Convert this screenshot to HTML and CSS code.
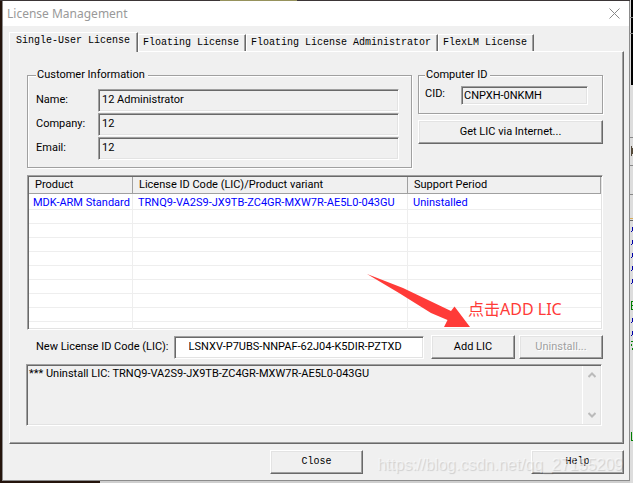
FILE: index.html
```html
<!DOCTYPE html>
<html lang="en">
<head>
<meta charset="utf-8">
<title>License Management</title>
<meta name="viewport" content="width=device-width, initial-scale=1">
<link rel="stylesheet" href="styles.css">
</head>
<body>
<div class="backdrop-top"></div>
<svg class="backdrop-right" width="3" height="483" viewBox="0 0 3 483" aria-hidden="true">
  <path fill="#ddd" d="M0 0h3v483H0z"/>
  <path fill="#000" d="M1 0h2v85H1z"/>
  <path fill="#888" d="M0 17h3v1H0zM0 33h3v1H0zM0 137h3v1H0zM0 165h3v1H0zM0 194h3v1H0z"/>
  <path fill="#554a3a" d="M1 146h1v10H1zM2 148h1v6H2z"/>
  <path fill="#d8ae5a" d="M0 218h3v1H0z"/>
  <path fill="#666" d="M0 220h3v1H0z"/>
  <path fill="#0000a8" d="M2 227h1v4H2zM1 231h1v1H1zM2 240h1v4H2zM1 244h1v1H1zM2 253h1v4H2zM1 257h1v1H1zM2 266h1v4H2zM1 270h1v1H1zM2 279h1v4H2zM1 283h1v1H1zM2 318h1v4H2zM1 322h1v1H1zM2 331h1v4H2zM1 335h1v1H1z"/>
  <path fill="#008000" d="M1 301h1v9H1zM2 301h1v1H2zM2 305h1v1H2zM2 309h1v1H2zM1 341h2v1H1zM1 344h1v2H1zM2 348h1v2H2zM1 432h1v9H1zM2 440h1v1H2z"/>
</svg>
<main class="window">
  <header class="titlebar">
    <h1 class="title">License Management</h1>
    <button class="close-x" type="button" aria-label="Close window">
      <svg width="11" height="11" viewBox="0 0 11 11" aria-hidden="true"><path d="M.5.5l10 10M10.500.5l-10 10" stroke="#888" fill="none"/></svg>
    </button>
  </header>
  <div class="content">
    <nav class="tabs" role="tablist">
      <button class="tab tab-active" type="button" role="tab" aria-selected="true">Single-User License</button>
      <button class="tab" type="button" role="tab">Floating License</button>
      <button class="tab" type="button" role="tab">Floating License Administrator</button>
      <button class="tab" type="button" role="tab">FlexLM License</button>
    </nav>
    <section class="panel">
      <div class="top-row">
        <fieldset class="group customer">
          <legend>Customer Information</legend>
          <label for="name">Name:</label><input class="field sunken" id="name" value="12 Administrator" readonly>
          <label for="company">Company:</label><input class="field sunken" id="company" value="12" readonly>
          <label for="email">Email:</label><input class="field sunken" id="email" value="12" readonly>
        </fieldset>
        <div class="side">
          <fieldset class="group computer">
            <legend>Computer ID</legend>
            <label for="cid">CID:</label><input class="field sunken" id="cid" value="CNPXH-0NKMH" readonly>
          </fieldset>
          <button class="btn" type="button">Get LIC via Internet...</button>
        </div>
      </div>
      <div class="list sunken">
        <table class="licenses">
          <colgroup><col class="col-product"><col class="col-code"><col></colgroup>
          <thead><tr><th>Product</th><th>License ID Code (LIC)/Product variant</th><th>Support Period</th></tr></thead>
          <tbody>
            <tr><td>MDK-ARM Standard</td><td>TRNQ9-VA2S9-JX9TB-ZC4GR-MXW7R-AE5L0-043GU</td><td>Uninstalled</td></tr>
            <tr><td></td><td></td><td></td></tr>
            <tr><td></td><td></td><td></td></tr>
            <tr><td></td><td></td><td></td></tr>
            <tr><td></td><td></td><td></td></tr>
            <tr><td></td><td></td><td></td></tr>
            <tr><td></td><td></td><td></td></tr>
            <tr><td></td><td></td><td></td></tr>
            <tr><td></td><td></td><td></td></tr>
            <tr class="cut"><td></td><td></td><td></td></tr>
          </tbody>
        </table>
        <div class="callout">
          <svg class="arrow" width="104" height="54" viewBox="0 0 104 54" aria-hidden="true"><path fill="#ff3b38" d="M0 0L36 14 84 37 87.500 32.500 103 53H77l3.500-7L64 39 32 19z"/></svg>
          <span class="callout-text">点击ADD LIC</span>
        </div>
      </div>
      <div class="new-row">
        <label for="lic">New License ID Code (LIC):</label>
        <input class="field sunken lic" id="lic" value="LSNXV-P7UBS-NNPAF-62J04-K5DIR-PZTXD">
        <button class="btn action" type="button">Add LIC</button>
        <button class="btn action" type="button" disabled>Uninstall...</button>
      </div>
      <div class="log sunken">
        <textarea class="log-text" aria-label="Messages" readonly>*** Uninstall LIC: TRNQ9-VA2S9-JX9TB-ZC4GR-MXW7R-AE5L0-043GU</textarea>
        <div class="scroll">
          <svg width="8" height="6" viewBox="0 0 8 6" aria-hidden="true"><path d="M.5 5L4 1.500 7.500 5" fill="none" stroke="#bbb" stroke-width="2"/></svg>
          <svg width="8" height="6" viewBox="0 0 8 6" aria-hidden="true"><path d="M.5 1L4 4.500 7.500 1" fill="none" stroke="#bbb" stroke-width="2"/></svg>
        </div>
      </div>
    </section>
    <footer class="footer">
      <button class="btn mono close" type="button">Close</button>
      <button class="btn mono help" type="button">Help</button>
      <span class="watermark">https://blog.csdn.net/qq_27155209</span>
    </footer>
  </div>
</main>
</body>
</html>
```
FILE: styles.css
```css
* { box-sizing: border-box; }

body {
  position: relative;
  min-height: 100vh;
  margin: 0;
  padding: 1px 3px 2px 2px;
  background: linear-gradient(90deg, #24140c 100px, #cfcfcf 100px);
  font: 11px/14px Roboto, "Liberation Sans", Arial, sans-serif;
  color: #000;
}

.backdrop-top {
  position: absolute;
  inset: 0 0 auto 0;
  height: 1px;
  background: linear-gradient(90deg, #3b3536 220px, #96925c 220px, #96925c 297px, #3b3536 297px);
}

.backdrop-right { position: absolute; top: 0; right: 0; }

button, input, textarea {
  margin: 0;
  padding: 0;
  border: 0;
  border-radius: 0;
  font: inherit;
  color: inherit;
  background: none;
}

.window {
  position: relative;
  display: flex;
  flex-direction: column;
  min-height: calc(100vh - 3px);
  border: 1px solid #8c8c8c;
  border-top: 0;
  background: #f0f0f0;
}

.titlebar {
  display: flex;
  align-items: center;
  justify-content: space-between;
  height: 25px;
  padding: 0 9px 0 4px;
  background: #fff;
}

.title {
  margin: 0;
  font: 12px/24px "Noto Sans", sans-serif;
  color: #999;
}

.close-x { display: flex; }

.content { padding: 6px 5px 6px 6px; }

.tabs {
  display: flex;
  align-items: flex-end;
  height: 19px;
  position: relative;
}

.tab {
  height: 17px;
  padding: 0 6px 0 4px;
  border: 1px solid #fff;
  border-right: 1px solid #696969;
  border-bottom: 0;
  box-shadow: inset -1px 0 #a0a0a0;
  font: 10px/16px "Liberation Mono", monospace;
  white-space: nowrap;
}

.tab-active {
  height: 20px;
  padding: 0 7px 4px 6px;
  background: #f0f0f0;
  margin-bottom: -1px;
}

.panel {
  padding: 16px 20px 17px 16px;
  border: 1px solid #fff;
  border-right: 1px solid #696969;
  border-bottom: 1px solid #696969;
  box-shadow: inset -1px -1px #a0a0a0;
}

.top-row { display: flex; align-items: flex-start; gap: 6px; }

.group {
  display: grid;
  align-content: start;
  min-width: 0;
  margin: 0;
  border: 1px solid #a0a0a0;
  box-shadow: 1px 1px #fff, inset 1px 1px #fff;
}

.group legend { padding: 0 3px 0 1px; background: #f0f0f0; }

.customer {
  flex: 1;
  grid-template-columns: 62px 1fr;
  row-gap: 2px;
  padding: 7px 12px 8px 8px;
  margin-left: 1px;
}

.computer {
  grid-template-columns: 36px 1fr;
  padding: 4px 14px 8px 6px;
}

.side {
  display: flex;
  flex-direction: column;
  width: 185px;
  gap: 6px;
}

.group label { line-height: 22px; }
.computer label { line-height: 16px; }

.sunken {
  border: 1px solid #fff;
  border-top: 1px solid #a0a0a0;
  border-left: 1px solid #a0a0a0;
  box-shadow: inset 1px 1px #696969, inset -1px -1px #e3e3e3;
}

.field {
  width: 100%;
  min-width: 0;
  height: 23px;
  padding: 0 3px 2px 3px;
}

.customer .field { margin-bottom: -1px; }

#cid { height: 19px; padding: 0 2px; }

.btn {
  height: 24px;
  padding: 0 4px;
  border: 1px solid #fff;
  border-right: 1px solid #696969;
  border-bottom: 1px solid #696969;
  box-shadow: inset -1px -1px #a0a0a0, inset 1px 1px #e3e3e3;
}

.btn:disabled { color: #a0a0a0; text-shadow: 1px 1px #fff; }

.list {
  position: relative;
  margin: 7px 0 0 1px;
  padding: 1px 1px 0 1px;
  height: 155px;
  background: #fff;
}

.licenses {
  width: 100%;
  table-layout: fixed;
  border-collapse: separate;
  border-spacing: 0;
}

.col-product { width: 104px; }
.col-code { width: 275px; }

.licenses th {
  height: 17px;
  padding: 0 6px;
  border-right: 1px solid #a0a0a0;
  border-bottom: 1px solid #a0a0a0;
  background: #f0f0f0;
  font-weight: 400;
  text-align: left;
}

.licenses td {
  height: 14px;
  padding: 0 0 0 5px;
  border-right: 1px solid #eee;
  border-bottom: 1px solid #eee;
  line-height: 13px;
  color: #00f;
  white-space: nowrap;
}

.licenses tbody tr:first-child td { height: 16px; padding-top: 2px; }
.licenses td:first-child { padding-left: 4px; }
.licenses td:last-child { border-right: 0; }
.licenses .cut td { height: 7px; border-bottom: 0; }

.callout {
  position: absolute;
  top: 98px;
  left: 339px;
  color: #ff3b38;
}

.callout-text {
  position: absolute;
  top: 25px;
  left: 101px;
  font: 16px/20px "Noto Sans", "Noto Sans CJK SC", sans-serif;
  white-space: nowrap;
}

.arrow { display: block; }

.new-row {
  display: flex;
  align-items: center;
  gap: 4px;
  margin: 5px 0 5px 10px;
}

.new-row .lic { flex: 1; margin: 0 3px 0 1px; padding-left: 14px; background: #fff; }
.action { width: 84px; }

.log { display: flex; height: 62px; margin-right: 1px; padding: 1px; }

.log-text { flex: 1; min-width: 0; resize: none; overflow: hidden; padding: 1px; }

.scroll {
  display: flex;
  flex-direction: column;
  align-items: center;
  justify-content: space-between;
  width: 18px;
  padding: 6px 0;
  border-left: 1px solid #fff;
}

.footer {
  position: relative;
  display: grid;
  grid-template-columns: 1fr 93px 1fr;
  margin-top: 6px;
}

.mono { font: 10px/14px "Liberation Mono", monospace; }
.close { grid-column: 2; }
.help { width: 93px; justify-self: end; }

.watermark {
  position: absolute;
  right: 1px;
  top: 5px;
  font: 16px/20px "Liberation Sans", Arial, sans-serif;
  color: rgba(255, 255, 255, 0.5);
  text-shadow: 1px 1px 1px rgba(0, 0, 0, 0.14);
  pointer-events: none;
}
```
